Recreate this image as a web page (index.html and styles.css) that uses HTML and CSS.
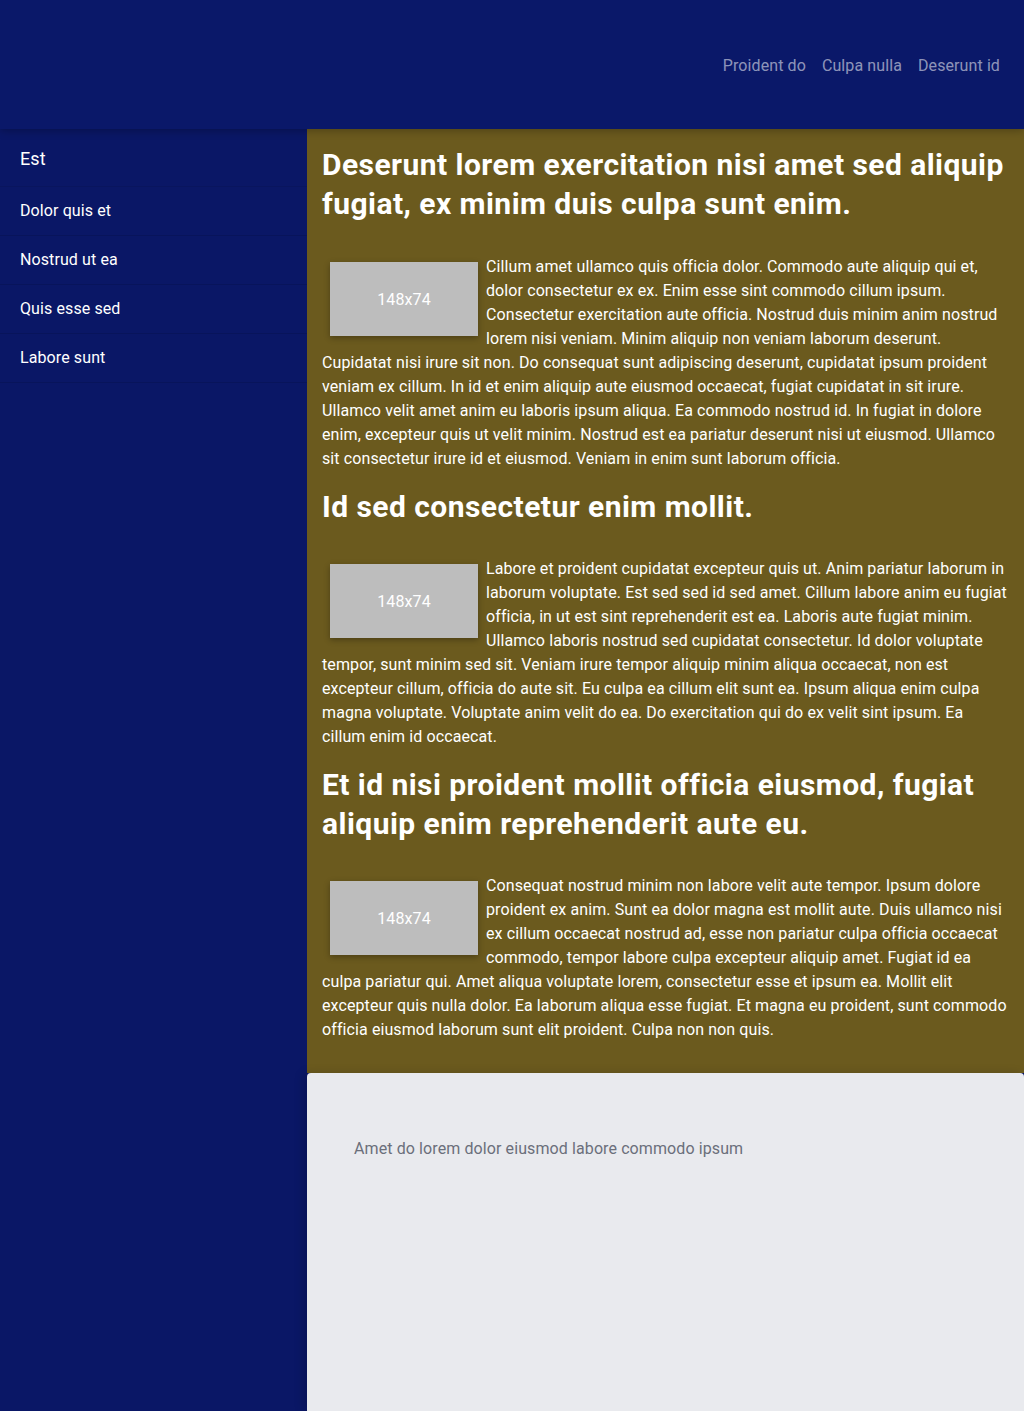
FILE: index.html
```html
<!DOCTYPE html>
<html lang="en">
<head>
<meta charset="utf-8">
<title>Page</title>
<link rel="stylesheet" href="styles.css">
</head>
<body>
<div class="page">
  <header class="topbar">
    <nav class="topnav">
      <a href="#">Proident do</a>
      <a href="#">Culpa nulla</a>
      <a href="#">Deserunt id</a>
    </nav>
  </header>
  <div class="body-row">
    <aside class="sidebar">
      <div class="side-title">Est</div>
      <ul class="side-list">
        <li>Dolor quis et</li>
        <li>Nostrud ut ea</li>
        <li>Quis esse sed</li>
        <li>Labore sunt</li>
      </ul>
    </aside>
    <div class="main-col">
      <main class="article">
        <h1>Deserunt lorem exercitation nisi amet sed aliquip fugiat, ex minim duis culpa sunt enim.</h1>
        <div class="thumb">148x74</div>
        <p>Cillum amet ullamco quis officia dolor. Commodo aute aliquip qui et, dolor consectetur ex ex. Enim esse sint commodo cillum ipsum. Consectetur exercitation aute officia. Nostrud duis minim anim nostrud lorem nisi veniam. Minim aliquip non veniam laborum deserunt. Cupidatat nisi irure sit non. Do consequat sunt adipiscing deserunt, cupidatat ipsum proident veniam ex cillum. In id et enim aliquip aute eiusmod occaecat, fugiat cupidatat in sit irure. Ullamco velit amet anim eu laboris ipsum aliqua. Ea commodo nostrud id. In fugiat in dolore enim, excepteur quis ut velit minim. Nostrud est ea pariatur deserunt nisi ut eiusmod. Ullamco sit consectetur irure id et eiusmod. Veniam in enim sunt laborum officia.</p>
        <h2>Id sed consectetur enim mollit.</h2>
        <div class="thumb">148x74</div>
        <p>Labore et proident cupidatat excepteur quis ut. Anim pariatur laborum in laborum voluptate. Est sed sed id sed amet. Cillum labore anim eu fugiat officia, in ut est sint reprehenderit est ea. Laboris aute fugiat minim. Ullamco laboris nostrud sed cupidatat consectetur. Id dolor voluptate tempor, sunt minim sed sit. Veniam irure tempor aliquip minim aliqua occaecat, non est excepteur cillum, officia do aute sit. Eu culpa ea cillum elit sunt ea. Ipsum aliqua enim culpa magna voluptate. Voluptate anim velit do ea. Do exercitation qui do ex velit sint ipsum. Ea cillum enim id occaecat.</p>
        <h2>Et id nisi proident mollit officia eiusmod, fugiat aliquip enim reprehenderit aute eu.</h2>
        <div class="thumb">148x74</div>
        <p>Consequat nostrud minim non labore velit aute tempor. Ipsum dolore proident ex anim. Sunt ea dolor magna est mollit aute. Duis ullamco nisi ex cillum occaecat nostrud ad, esse non pariatur culpa officia occaecat commodo, tempor labore culpa excepteur aliquip amet. Fugiat id ea culpa pariatur qui. Amet aliqua voluptate lorem, consectetur esse et ipsum ea. Mollit elit excepteur quis nulla dolor. Ea laborum aliqua esse fugiat. Et magna eu proident, sunt commodo officia eiusmod laborum sunt elit proident. Culpa non non quis.</p>
      </main>
      <footer class="footer-card">
        <p class="footer-text">Amet do lorem dolor eiusmod labore commodo ipsum</p>
      </footer>
    </div>
  </div>
</div>
</body>
</html>
```

FILE: styles.css
```css
* { box-sizing: border-box; }

html, body {
  margin: 0;
  padding: 0;
}

body {
  font-family: Roboto, "Noto Sans", "Liberation Sans", sans-serif;
  font-size: 16px;
  line-height: 24px;
  letter-spacing: 0.1px;
  color: #ffffff;
  background: #0a1766;
}

.page {
  min-height: 100vh;
  display: flex;
  flex-direction: column;
}

.topbar {
  height: 129px;
  background: #0a1869;
  display: flex;
  align-items: center;
  justify-content: flex-end;
  padding: 2px 24px 0 24px;
  position: relative;
  z-index: 3;
  box-shadow: 0 2px 8px rgba(0, 0, 0, 0.25);
}

.topnav {
  display: flex;
  gap: 16px;
}

.topnav a {
  color: rgba(255, 255, 255, 0.55);
  text-decoration: none;
  font-size: 16px;
  line-height: 24px;
}

.body-row {
  flex: 1;
  display: flex;
}

.sidebar {
  width: 307px;
  flex: none;
  background: #0a1766;
  position: relative;
  z-index: 1;
}

.side-title {
  padding: 18px 20px 15px 20px;
  font-size: 18px;
  line-height: 24px;
  border-bottom: 1px solid rgba(0, 0, 0, 0.08);
}

.side-list {
  list-style: none;
  margin: 0;
  padding: 0;
}

.side-list li {
  padding: 12px 20px;
  line-height: 24px;
  border-bottom: 1px solid rgba(0, 0, 0, 0.1);
}

.main-col {
  flex: 1;
  display: flex;
  flex-direction: column;
  min-width: 0;
}

.article {
  background: #6b5a1e;
  padding: 16px 15px 15px 15px;
  display: flow-root;
}

.article h1,
.article h2 {
  font-size: 30px;
  line-height: 39px;
  font-weight: 700;
  letter-spacing: 0.45px;
  margin: 0 0 31px 0;
}

.article h1 {
  margin-bottom: 32px;
}

.article p {
  margin: 0 0 16px 0;
}

.thumb {
  float: left;
  width: 148px;
  height: 74px;
  margin: 7px 8px 8px 8px;
  padding-top: 2px;
  background: #bdbdbd;
  color: #ffffff;
  display: flex;
  align-items: center;
  justify-content: center;
  font-size: 16px;
  line-height: 24px;
  box-shadow: 0 2px 6px rgba(0, 0, 0, 0.3);
}

.footer-card {
  flex: 1;
  background: #e9eaee;
  border-radius: 4px 4px 0 0;
  padding: 64px 47px;
  position: relative;
  z-index: 2;
  box-shadow: -4px 0 10px rgba(0, 0, 0, 0.15);
}

.footer-text {
  margin: 0;
  color: #6b6f7b;
  font-size: 16px;
  line-height: 24px;
}
```
